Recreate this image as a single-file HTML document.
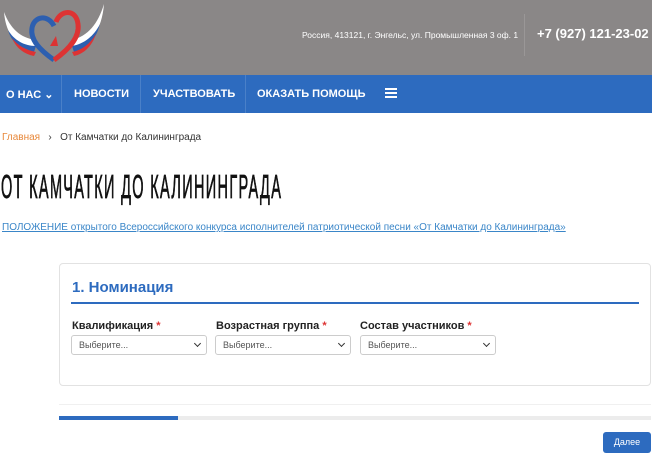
<!DOCTYPE html>
<html><head><meta charset="utf-8"><style>
*{margin:0;padding:0;box-sizing:border-box}
body{width:652px;height:462px;overflow:hidden;background:#fff;font-family:"Liberation Sans",sans-serif;position:relative}
.a{position:absolute}
.hdr{left:0;top:0;width:652px;height:75px;background:#8a8787}
.nav{left:0;top:75px;width:652px;height:38px;background:#2d6bbf;color:#fff;font-weight:bold;font-size:11px}
.nav span{position:absolute;top:13px;white-space:nowrap}
.sep{position:absolute;top:0;width:1px;height:38px;background:#4a80c8}
.lbl{font-size:11px;font-weight:bold;color:#222;top:320px}
.lbl b{color:#d33}
.sel{top:335px;height:20px;border:1px solid #ccc;border-radius:3px;background:#fff;font-size:9px;color:#555;padding:4px 0 0 7px}
.sel:after{content:"";position:absolute;right:6px;top:5px;width:4px;height:4px;border-right:1.5px solid #333;border-bottom:1.5px solid #333;transform:rotate(45deg)}
</style></head><body>
<div class="a hdr"></div>
<svg class="a" style="left:0;top:0" width="108" height="70" viewBox="0 0 108 70">
<path d="M4 12 C10 28 20 38 36 40 L34 50 C18 48 6 36 4 12Z" fill="#fff"/>
<path d="M8 30 C14 40 24 46 36 46 L34 52 C22 50 12 44 8 30Z" fill="#2d5fb0"/>
<path d="M12 38 C18 46 26 50 36 52 L34 56 C24 54 16 48 12 38Z" fill="#d33"/>
<path d="M104 4 C98 24 88 36 72 40 L74 50 C90 46 102 30 104 4Z" fill="#fff"/>
<path d="M100 24 C94 36 84 44 72 46 L74 52 C86 50 96 40 100 24Z" fill="#2d5fb0"/>
<path d="M96 34 C90 44 82 50 72 52 L74 56 C84 54 92 46 96 34Z" fill="#d33"/>
<path d="M54 60 C40 50 30 40 32 28 C34 16 48 14 54 26" fill="none" stroke="#2d5fb0" stroke-width="5"/>
<path d="M54 60 C68 50 80 38 78 24 C76 8 60 10 56 22" fill="none" stroke="#d33" stroke-width="5"/>
<path d="M50 46 L58 46 L56 36 Z" fill="#d33"/>
</svg>
<div class="a" style="left:302px;top:30px;font-size:8.5px;color:#fff;white-space:nowrap">Россия, 413121, г. Энгельс, ул. Промышленная 3 оф. 1</div>
<div class="a" style="left:524px;top:14px;width:1px;height:42px;background:#9a9797"></div>
<div class="a" style="left:537px;top:26px;font-size:13px;font-weight:bold;color:#fff;white-space:nowrap">+7 (927) 121-23-02</div>
<div class="a nav">
<span style="left:6px">О НАС ⌄</span><div class="sep" style="left:61px"></div>
<span style="left:74px">НОВОСТИ</span><div class="sep" style="left:140px"></div>
<span style="left:153px">УЧАСТВОВАТЬ</span><div class="sep" style="left:245px"></div>
<span style="left:257px">ОКАЗАТЬ ПОМОЩЬ</span>
<div class="a" style="left:385px;top:13px;width:12px;height:2px;background:#fff;box-shadow:0 4px 0 #fff,0 8px 0 #fff"></div>
</div>
<div class="a" style="left:2px;top:132px;font-size:10px;color:#333"><span style="color:#e8883a">Главная</span>&nbsp;&nbsp;&nbsp;›&nbsp;&nbsp;&nbsp;От Камчатки до Калининграда</div>
<div class="a" style="left:1px;top:168px;font-size:33px;color:#111;-webkit-text-stroke:0.8px #111;transform:scaleX(0.44);transform-origin:0 0;white-space:nowrap;letter-spacing:3px">ОТ КАМЧАТКИ ДО КАЛИНИНГРАДА</div>
<div class="a" style="left:2px;top:222px;font-size:10px;color:#3a86c8;text-decoration:underline;white-space:nowrap">ПОЛОЖЕНИЕ открытого Всероссийского конкурса исполнителей патриотической песни «От Камчатки до Калининграда»</div>
<div class="a" style="left:59px;top:263px;width:592px;height:123px;border:1px solid #e2e2e2;border-radius:4px"></div>
<div class="a" style="left:72px;top:279px;font-size:15px;font-weight:bold;color:#2d6bbf">1. Номинация</div>
<div class="a" style="left:71px;top:302px;width:568px;height:2px;background:#2d6bbf"></div>
<div class="a lbl" style="left:72px">Квалификация <b>*</b></div>
<div class="a lbl" style="left:216px">Возрастная группа <b>*</b></div>
<div class="a lbl" style="left:360px">Состав участников <b>*</b></div>
<div class="a sel" style="left:71px;width:136px">Выберите...</div>
<div class="a sel" style="left:215px;width:136px">Выберите...</div>
<div class="a sel" style="left:360px;width:136px">Выберите...</div>
<div class="a" style="left:59px;top:404px;width:592px;height:1px;background:#f0f0f0"></div>
<div class="a" style="left:59px;top:416px;width:592px;height:4px;background:#ececec"></div>
<div class="a" style="left:59px;top:416px;width:119px;height:4px;background:#2d6bbf"></div>
<div class="a" style="left:603px;top:432px;width:48px;height:21px;background:#2d6bbf;border-radius:3px;color:#fff;font-size:9px;text-align:center;line-height:21px">Далее</div>
</body></html>
